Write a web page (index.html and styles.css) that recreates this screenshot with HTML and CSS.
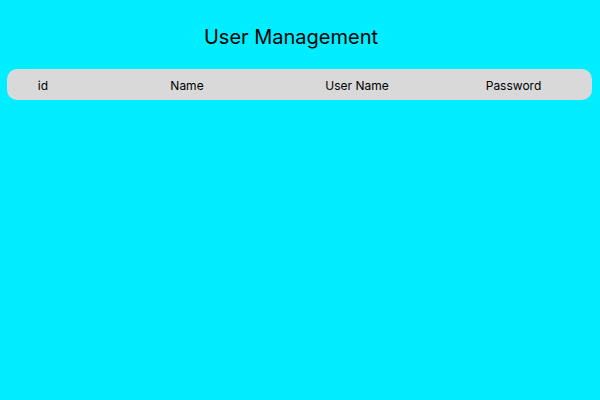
FILE: index.html
```html
<!DOCTYPE html>
<html>
<head>
<meta charset="utf-8">
<link rel="stylesheet" href="styles.css">
</head>
<body>
<div class="page">
  <h1 class="title">User Management</h1>
  <div class="table-head">
    <div class="cell c1">id</div>
    <div class="cell c2">Name</div>
    <div class="cell c3">User Name</div>
    <div class="cell c4">Password</div>
  </div>
</div>
</body>
</html>
```
FILE: styles.css
```css
html, body {
  margin: 0;
  padding: 0;
  background: #00eeff;
  font-family: Inter, "Noto Sans", sans-serif;
  color: #000;
}
.page {
  width: 600px;
  height: 400px;
  padding: 25px 8px 0 7px;
  box-sizing: border-box;
}
.title {
  margin: 0;
  padding-right: 17px;
  text-align: center;
  font-size: 20px;
  font-weight: 400;
  line-height: 24px;
}
.table-head {
  margin-top: 20px;
  height: 31px;
  padding-top: 2px;
  box-sizing: border-box;
  background: #d9d9d9;
  border-radius: 10px;
  display: grid;
  grid-template-columns: 72px 216px 124px 1fr;
  align-items: center;
  font-size: 12px;
  line-height: 15px;
}
.cell {
  text-align: center;
}
.c4 {
  padding-left: 16px;
}
```
